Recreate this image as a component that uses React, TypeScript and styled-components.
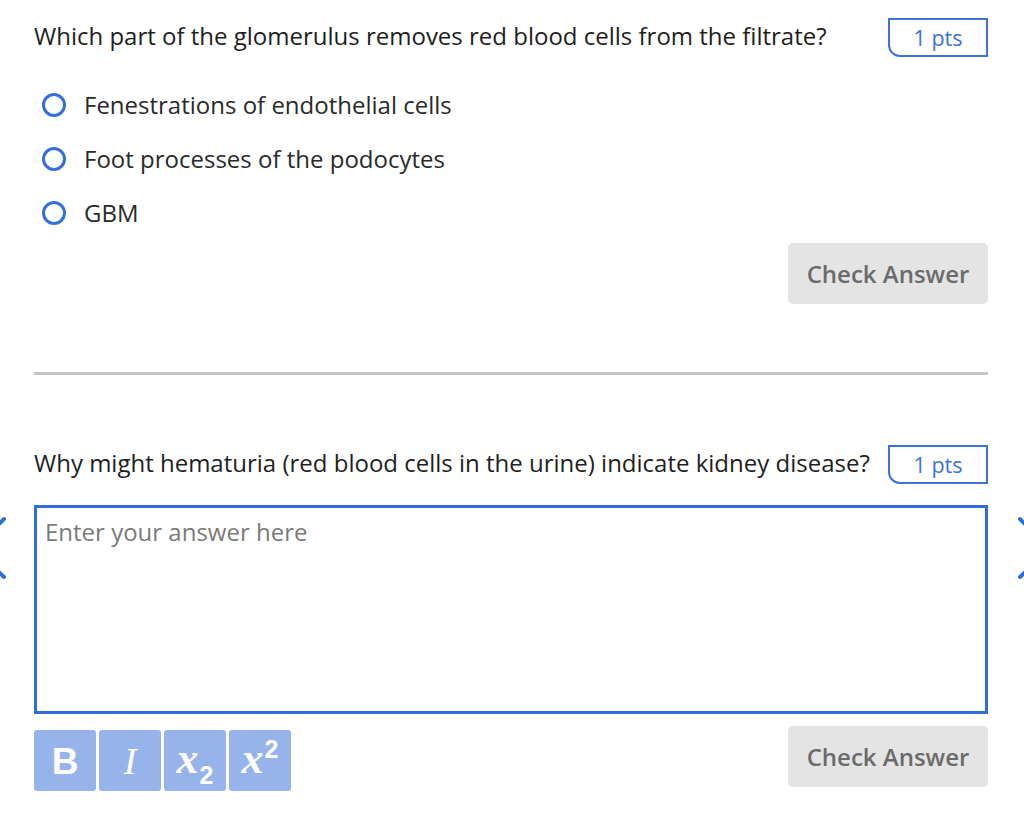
import React from "react";
import styled, { createGlobalStyle } from "styled-components";

const Global = createGlobalStyle`
  html, body { margin: 0; padding: 0; background: #fff; overflow: hidden; }
  body { font-family: "Open Sans", "Liberation Sans", sans-serif; color: #222; }
`;

const Page = styled.div`
  position: relative;
  width: 1024px;
  height: 834px;
  overflow: hidden;
`;

const Content = styled.div`
  width: 954px;
  padding: 18px 0 0 34px;
  display: flex;
  flex-direction: column;
`;

const QuestionRow = styled.div<{ $top?: number }>`
  display: flex;
  justify-content: space-between;
  align-items: center;
  margin-top: ${(p) => p.$top ?? 0}px;
`;

const QuestionText = styled.div`
  font-size: 24px;
  line-height: 30px;
  margin-top: -3px;
  color: #1e1e1e;
`;

const Badge = styled.div`
  width: 100px;
  height: 39px;
  box-sizing: border-box;
  border: 2px solid #3d72d6;
  border-radius: 0 0 0 12px;
  display: flex;
  align-items: center;
  justify-content: center;
  color: #3d72d6;
  font-size: 21.5px;
  font-weight: 500;
`;

const Options = styled.div`
  display: flex;
  flex-direction: column;
  gap: 24px;
  margin-top: 33px;
`;

const Option = styled.label`
  display: flex;
  align-items: center;
  gap: 18px;
  font-size: 24px;
  line-height: 30px;
  color: #2a2a2a;
  padding-left: 8px;
`;

const Radio = styled.span`
  width: 24px;
  height: 24px;
  box-sizing: border-box;
  border: 3.5px solid #3570d8;
  border-radius: 50%;
  flex: none;
`;

const ActionRow = styled.div<{ $top: number }>`
  display: flex;
  justify-content: space-between;
  align-items: flex-start;
  margin-top: ${(p) => p.$top}px;
`;

const CheckButton = styled.button`
  width: 200px;
  height: 61px;
  margin-left: auto;
  border: none;
  border-radius: 5px;
  background: #e4e4e4;
  color: #6b6b6b;
  font-family: "Open Sans", "Liberation Sans", sans-serif;
  font-size: 24px;
  font-weight: 600;
`;

const Divider = styled.hr`
  border: none;
  height: 3px;
  background: #c6c6c6;
  margin: 68px 0 0 0;
`;

const AnswerBox = styled.div`
  margin-top: 21px;
  height: 209px;
  box-sizing: border-box;
  border: 3px solid #2f6ed6;
  padding: 8px 8px;
  font-size: 24px;
  line-height: 32px;
  color: #7a7a7a;
`;

const Toolbar = styled.div`
  display: flex;
  gap: 3px;
  margin-top: 4px;
`;

const ToolButton = styled.div`
  width: 62px;
  height: 61px;
  border-radius: 3px;
  background: #97b4ea;
  color: #fff;
  display: flex;
  align-items: center;
  justify-content: center;
`;

const BoldGlyph = styled.span`
  font-family: "Liberation Sans", Arial, sans-serif;
  font-weight: 700;
  font-size: 37px;
  line-height: 1;
  margin-top: 2px;
`;

const ItalicGlyph = styled.span`
  font-family: "Liberation Serif", "DejaVu Serif", serif;
  font-style: italic;
  font-size: 38px;
  line-height: 1;
`;

const MathGlyph = styled.span`
  display: inline-block;
  font-family: "Liberation Serif", "DejaVu Serif", serif;
  font-style: italic;
  font-weight: 700;
  font-size: 44px;
  line-height: 44px;
  margin-top: -4px;
  sub, sup {
    font-family: "Liberation Sans", Arial, sans-serif;
    font-style: normal;
    font-weight: 700;
    font-size: 25px;
    line-height: 0;
    margin-left: 1px;
  }
  sub { vertical-align: -11px; }
  sup { vertical-align: 15px; }
`;

const Chevron = styled.svg<{ $side: "left" | "right" }>`
  position: absolute;
  top: 515px;
  ${(p) => (p.$side === "left" ? "left: -30px;" : "right: -30px;")}
  width: 36px;
  height: 68px;
`;

const options = ["Fenestrations of endothelial cells", "Foot processes of the podocytes", "GBM"];

export default function App() {
  return (
    <Page>
      <Global />
      <Content>
        <QuestionRow>
          <QuestionText>Which part of the glomerulus removes red blood cells from the filtrate?</QuestionText>
          <Badge>1 pts</Badge>
        </QuestionRow>
        <Options>
          {options.map((o) => (
            <Option key={o}>
              <Radio />
              {o}
            </Option>
          ))}
        </Options>
        <ActionRow $top={15}>
          <CheckButton>Check Answer</CheckButton>
        </ActionRow>
        <Divider />
        <QuestionRow $top={70}>
          <QuestionText>Why might hematuria (red blood cells in the urine) indicate kidney disease?</QuestionText>
          <Badge>1 pts</Badge>
        </QuestionRow>
        <AnswerBox>Enter your answer here</AnswerBox>
        <ActionRow $top={12}>
          <Toolbar>
            <ToolButton>
              <BoldGlyph>B</BoldGlyph>
            </ToolButton>
            <ToolButton>
              <ItalicGlyph>I</ItalicGlyph>
            </ToolButton>
            <ToolButton>
              <MathGlyph>
                x<sub>2</sub>
              </MathGlyph>
            </ToolButton>
            <ToolButton>
              <MathGlyph>
                x<sup>2</sup>
              </MathGlyph>
            </ToolButton>
          </Toolbar>
          <CheckButton>Check Answer</CheckButton>
        </ActionRow>
      </Content>
      <Chevron $side="left" viewBox="0 0 36 68">
        <polyline points="34,4 4,34 34,62" fill="none" stroke="#2f6ed6" strokeWidth="4" strokeLinecap="round" strokeLinejoin="round" />
      </Chevron>
      <Chevron $side="right" viewBox="0 0 36 68">
        <polyline points="2,4 32,34 2,62" fill="none" stroke="#2f6ed6" strokeWidth="4" strokeLinecap="round" strokeLinejoin="round" />
      </Chevron>
    </Page>
  );
}
